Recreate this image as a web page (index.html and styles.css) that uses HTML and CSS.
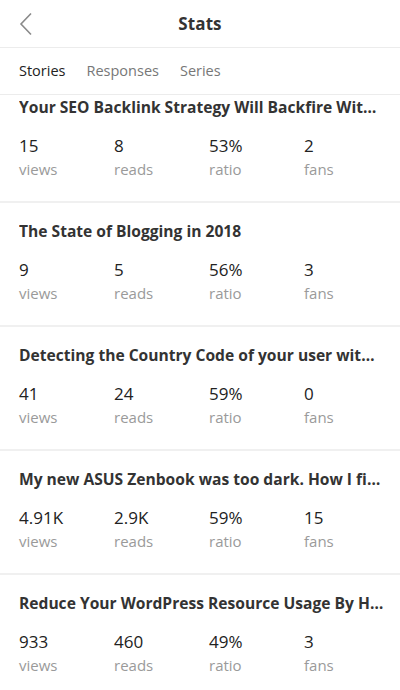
FILE: index.html
```html
<!DOCTYPE html>
<html>
<head>
<meta charset="utf-8">
<link rel="stylesheet" href="styles.css">
</head>
<body>
<div class="app">
  <header class="topbar">
    <svg class="back" width="14" height="24" viewBox="0 0 14 24"><path d="M12 1.5 L2 12 L12 22.5" fill="none" stroke="#8a8a8a" stroke-width="1.6"/></svg>
    <h1 class="title">Stats</h1>
    <span></span>
  </header>
  <nav class="tabs">
    <span class="tab active">Stories</span>
    <span class="tab">Responses</span>
    <span class="tab">Series</span>
  </nav>
  <div class="scroller">
    <div class="list">
      <section class="card">
        <h2 class="story">Your SEO Backlink Strategy Will Backfire Without This Simple Trick</h2>
        <div class="stats">
          <div class="stat"><span class="num">15</span><span class="lbl">views</span></div>
          <div class="stat"><span class="num">8</span><span class="lbl">reads</span></div>
          <div class="stat"><span class="num">53%</span><span class="lbl">ratio</span></div>
          <div class="stat"><span class="num">2</span><span class="lbl">fans</span></div>
        </div>
      </section>
      <section class="card">
        <h2 class="story">The State of Blogging in 2018</h2>
        <div class="stats">
          <div class="stat"><span class="num">9</span><span class="lbl">views</span></div>
          <div class="stat"><span class="num">5</span><span class="lbl">reads</span></div>
          <div class="stat"><span class="num">56%</span><span class="lbl">ratio</span></div>
          <div class="stat"><span class="num">3</span><span class="lbl">fans</span></div>
        </div>
      </section>
      <section class="card">
        <h2 class="story">Detecting the Country Code of your user without any server</h2>
        <div class="stats">
          <div class="stat"><span class="num">41</span><span class="lbl">views</span></div>
          <div class="stat"><span class="num">24</span><span class="lbl">reads</span></div>
          <div class="stat"><span class="num">59%</span><span class="lbl">ratio</span></div>
          <div class="stat"><span class="num">0</span><span class="lbl">fans</span></div>
        </div>
      </section>
      <section class="card">
        <h2 class="story">My new ASUS Zenbook was too dark. How I fixed it</h2>
        <div class="stats">
          <div class="stat"><span class="num">4.91K</span><span class="lbl">views</span></div>
          <div class="stat"><span class="num">2.9K</span><span class="lbl">reads</span></div>
          <div class="stat"><span class="num">59%</span><span class="lbl">ratio</span></div>
          <div class="stat"><span class="num">15</span><span class="lbl">fans</span></div>
        </div>
      </section>
      <section class="card">
        <h2 class="story">Reduce Your WordPress Resource Usage By Half</h2>
        <div class="stats">
          <div class="stat"><span class="num">933</span><span class="lbl">views</span></div>
          <div class="stat"><span class="num">460</span><span class="lbl">reads</span></div>
          <div class="stat"><span class="num">49%</span><span class="lbl">ratio</span></div>
          <div class="stat"><span class="num">3</span><span class="lbl">fans</span></div>
        </div>
      </section>
    </div>
  </div>
</div>
</body>
</html>
```
FILE: styles.css
```css
* { box-sizing: border-box; }
html, body { margin: 0; padding: 0; background: #fff; }
body { font-family: "Open Sans", "Noto Sans", sans-serif; color: #222; }
.app { width: 400px; height: 690px; overflow: hidden; display: flex; flex-direction: column; }
.topbar {
  height: 48px; flex: none; border-bottom: 1px solid #ececec;
  display: grid; grid-template-columns: 1fr auto 1fr; align-items: center;
  padding: 0 19px;
}
.back { display: block; }
.title { margin: 0; font-size: 17px; font-weight: 700; color: #333; letter-spacing: 0.1px; }
.tabs {
  height: 47px; flex: none; border-bottom: 1px solid #ececec;
  display: flex; align-items: center; gap: 21px; padding: 0 0 2px 19px;
}
.tab { font-size: 14.5px; color: #777; }
.tab.active { color: #222; }
.scroller { flex: 1; overflow: hidden; }
.list { margin-top: -16px; }
.card {
  height: 124px; border-bottom: 2px solid #f0f0f0;
  padding: 17px 16px 0 19px;
}
.story {
  margin: 0; font-size: 15.6px; font-weight: 700; color: #333; line-height: 22px;
  white-space: nowrap; overflow: hidden; text-overflow: ellipsis;
}
.stats { display: grid; grid-template-columns: repeat(4, 95px); margin-top: 17px; }
.stat { display: flex; flex-direction: column; }
.num { font-size: 17px; line-height: 22px; color: #222; }
.lbl { font-size: 15px; line-height: 22px; color: #9a9a9a; margin-top: 1px; }
```
